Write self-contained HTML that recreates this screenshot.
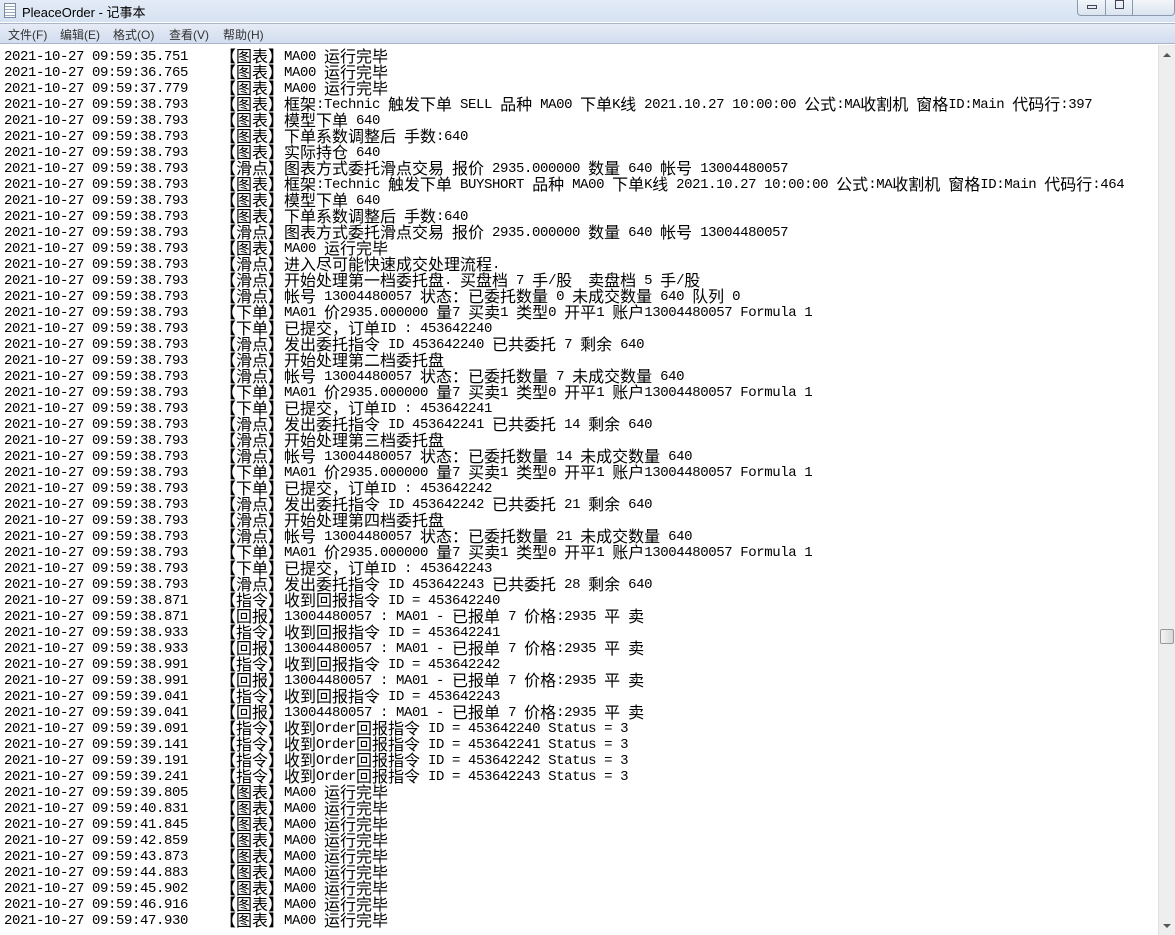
<!DOCTYPE html>
<html><head><meta charset="utf-8"><style>
*{margin:0;padding:0;box-sizing:border-box}
body{width:1175px;height:935px;overflow:hidden;background:#fff;position:relative;font-family:"Liberation Sans","Noto Sans CJK SC",sans-serif}
#title{position:absolute;left:0;top:0;width:1175px;height:22px;background:linear-gradient(#e3ecf7,#d6e2f1);}
#title .t{position:absolute;left:22px;top:2px;font-size:13px;color:#000}
#title .ic{position:absolute;left:4px;top:3px;width:12px;height:15px;border:1px solid #7a8aa0;background:repeating-linear-gradient(#fff 0 2px,#9ab 2px 3px)}
#btns{position:absolute;left:1077px;top:-1px;width:98px;height:17px;border:1px solid #8a99ad;border-top:none;border-radius:0 0 4px 4px;background:linear-gradient(#f4f7fb,#dbe4ef)}
#btns div{position:absolute;top:0;height:16px;border-right:1px solid #8a99ad}
#menu{position:absolute;left:0;top:23px;width:1175px;height:21px;background:linear-gradient(#e6ecf6,#d3ddef);border-top:1px solid #a9b6c8;border-bottom:1px solid #a9b6c8;font-size:12px;color:#333}
#menu span{position:absolute;top:2px}
#txt{position:absolute;left:4px;top:48px;width:1150px;font-family:"Liberation Mono","Noto Sans CJK SC",monospace;font-size:14px;letter-spacing:-0.4px;color:#000}
#txt div{height:16px;line-height:16px;position:relative;white-space:pre;top:1px}
#txt u{position:absolute;left:216px;top:-4px;text-decoration:none;white-space:pre;line-height:16px}
i{font-style:normal;font-size:16px;letter-spacing:0;font-family:"Noto Sans CJK SC","WenQuanYi Zen Hei",sans-serif;line-height:16px;position:relative;top:2px}
#sb{position:absolute;left:1158px;top:45px;width:17px;height:890px;background:#eeeeee;border-left:1px solid #e0e0e0}
#thumb{position:absolute;left:1px;top:584px;width:14px;height:15px;border:1px solid #9a9a9a;border-radius:2px;background:linear-gradient(90deg,#f4f4f4,#d8d8d8)}
</style></head><body>
<div id="title"><div class="ic"></div><div class="t">PleaceOrder - 记事本</div>
<div id="btns"><div style="left:0;width:28px"><span style="position:absolute;left:9px;top:6px;width:10px;height:4px;border:1px solid #445"></span></div><div style="left:28px;width:27px"><span style="position:absolute;left:9px;top:1px;width:9px;height:9px;border:1px solid #445"></span></div></div></div>
<div id="menu"><span style="left:8px">文件(F)</span><span style="left:60px">编辑(E)</span><span style="left:113px">格式(O)</span><span style="left:169px">查看(V)</span><span style="left:223px">帮助(H)</span></div>
<div id="txt"><div>2021-10-27 09:59:35.751<u><i>【图表】</i>MA00 <i>运行完毕</i></u></div><div>2021-10-27 09:59:36.765<u><i>【图表】</i>MA00 <i>运行完毕</i></u></div><div>2021-10-27 09:59:37.779<u><i>【图表】</i>MA00 <i>运行完毕</i></u></div><div>2021-10-27 09:59:38.793<u><i>【图表】框架</i>:Technic <i>触发下单</i> SELL <i>品种</i> MA00 <i>下单</i>K<i>线</i> 2021.10.27 10:00:00 <i>公式</i>:MA<i>收割机</i> <i>窗格</i>ID:Main <i>代码行</i>:397</u></div><div>2021-10-27 09:59:38.793<u><i>【图表】模型下单</i> 640</u></div><div>2021-10-27 09:59:38.793<u><i>【图表】下单系数调整后</i> <i>手数</i>:640</u></div><div>2021-10-27 09:59:38.793<u><i>【图表】实际持仓</i> 640</u></div><div>2021-10-27 09:59:38.793<u><i>【滑点】图表方式委托滑点交易</i> <i>报价</i> 2935.000000 <i>数量</i> 640 <i>帐号</i> 13004480057</u></div><div>2021-10-27 09:59:38.793<u><i>【图表】框架</i>:Technic <i>触发下单</i> BUYSHORT <i>品种</i> MA00 <i>下单</i>K<i>线</i> 2021.10.27 10:00:00 <i>公式</i>:MA<i>收割机</i> <i>窗格</i>ID:Main <i>代码行</i>:464</u></div><div>2021-10-27 09:59:38.793<u><i>【图表】模型下单</i> 640</u></div><div>2021-10-27 09:59:38.793<u><i>【图表】下单系数调整后</i> <i>手数</i>:640</u></div><div>2021-10-27 09:59:38.793<u><i>【滑点】图表方式委托滑点交易</i> <i>报价</i> 2935.000000 <i>数量</i> 640 <i>帐号</i> 13004480057</u></div><div>2021-10-27 09:59:38.793<u><i>【图表】</i>MA00 <i>运行完毕</i></u></div><div>2021-10-27 09:59:38.793<u><i>【滑点】进入尽可能快速成交处理流程</i>.</u></div><div>2021-10-27 09:59:38.793<u><i>【滑点】开始处理第一档委托盘</i>. <i>买盘档</i> 7 <i>手</i>/<i>股</i>  <i>卖盘档</i> 5 <i>手</i>/<i>股</i></u></div><div>2021-10-27 09:59:38.793<u><i>【滑点】帐号</i> 13004480057 <i>状态：已委托数量</i> 0 <i>未成交数量</i> 640 <i>队列</i> 0</u></div><div>2021-10-27 09:59:38.793<u><i>【下单】</i>MA01 <i>价</i>2935.000000 <i>量</i>7 <i>买卖</i>1 <i>类型</i>0 <i>开平</i>1 <i>账户</i>13004480057 Formula 1</u></div><div>2021-10-27 09:59:38.793<u><i>【下单】已提交，订单</i>ID : 453642240</u></div><div>2021-10-27 09:59:38.793<u><i>【滑点】发出委托指令</i> ID 453642240 <i>已共委托</i> 7 <i>剩余</i> 640</u></div><div>2021-10-27 09:59:38.793<u><i>【滑点】开始处理第二档委托盘</i></u></div><div>2021-10-27 09:59:38.793<u><i>【滑点】帐号</i> 13004480057 <i>状态：已委托数量</i> 7 <i>未成交数量</i> 640</u></div><div>2021-10-27 09:59:38.793<u><i>【下单】</i>MA01 <i>价</i>2935.000000 <i>量</i>7 <i>买卖</i>1 <i>类型</i>0 <i>开平</i>1 <i>账户</i>13004480057 Formula 1</u></div><div>2021-10-27 09:59:38.793<u><i>【下单】已提交，订单</i>ID : 453642241</u></div><div>2021-10-27 09:59:38.793<u><i>【滑点】发出委托指令</i> ID 453642241 <i>已共委托</i> 14 <i>剩余</i> 640</u></div><div>2021-10-27 09:59:38.793<u><i>【滑点】开始处理第三档委托盘</i></u></div><div>2021-10-27 09:59:38.793<u><i>【滑点】帐号</i> 13004480057 <i>状态：已委托数量</i> 14 <i>未成交数量</i> 640</u></div><div>2021-10-27 09:59:38.793<u><i>【下单】</i>MA01 <i>价</i>2935.000000 <i>量</i>7 <i>买卖</i>1 <i>类型</i>0 <i>开平</i>1 <i>账户</i>13004480057 Formula 1</u></div><div>2021-10-27 09:59:38.793<u><i>【下单】已提交，订单</i>ID : 453642242</u></div><div>2021-10-27 09:59:38.793<u><i>【滑点】发出委托指令</i> ID 453642242 <i>已共委托</i> 21 <i>剩余</i> 640</u></div><div>2021-10-27 09:59:38.793<u><i>【滑点】开始处理第四档委托盘</i></u></div><div>2021-10-27 09:59:38.793<u><i>【滑点】帐号</i> 13004480057 <i>状态：已委托数量</i> 21 <i>未成交数量</i> 640</u></div><div>2021-10-27 09:59:38.793<u><i>【下单】</i>MA01 <i>价</i>2935.000000 <i>量</i>7 <i>买卖</i>1 <i>类型</i>0 <i>开平</i>1 <i>账户</i>13004480057 Formula 1</u></div><div>2021-10-27 09:59:38.793<u><i>【下单】已提交，订单</i>ID : 453642243</u></div><div>2021-10-27 09:59:38.793<u><i>【滑点】发出委托指令</i> ID 453642243 <i>已共委托</i> 28 <i>剩余</i> 640</u></div><div>2021-10-27 09:59:38.871<u><i>【指令】收到回报指令</i> ID = 453642240</u></div><div>2021-10-27 09:59:38.871<u><i>【回报】</i>13004480057 : MA01 - <i>已报单</i> 7 <i>价格</i>:2935 <i>平</i> <i>卖</i></u></div><div>2021-10-27 09:59:38.933<u><i>【指令】收到回报指令</i> ID = 453642241</u></div><div>2021-10-27 09:59:38.933<u><i>【回报】</i>13004480057 : MA01 - <i>已报单</i> 7 <i>价格</i>:2935 <i>平</i> <i>卖</i></u></div><div>2021-10-27 09:59:38.991<u><i>【指令】收到回报指令</i> ID = 453642242</u></div><div>2021-10-27 09:59:38.991<u><i>【回报】</i>13004480057 : MA01 - <i>已报单</i> 7 <i>价格</i>:2935 <i>平</i> <i>卖</i></u></div><div>2021-10-27 09:59:39.041<u><i>【指令】收到回报指令</i> ID = 453642243</u></div><div>2021-10-27 09:59:39.041<u><i>【回报】</i>13004480057 : MA01 - <i>已报单</i> 7 <i>价格</i>:2935 <i>平</i> <i>卖</i></u></div><div>2021-10-27 09:59:39.091<u><i>【指令】收到</i>Order<i>回报指令</i> ID = 453642240 Status = 3</u></div><div>2021-10-27 09:59:39.141<u><i>【指令】收到</i>Order<i>回报指令</i> ID = 453642241 Status = 3</u></div><div>2021-10-27 09:59:39.191<u><i>【指令】收到</i>Order<i>回报指令</i> ID = 453642242 Status = 3</u></div><div>2021-10-27 09:59:39.241<u><i>【指令】收到</i>Order<i>回报指令</i> ID = 453642243 Status = 3</u></div><div>2021-10-27 09:59:39.805<u><i>【图表】</i>MA00 <i>运行完毕</i></u></div><div>2021-10-27 09:59:40.831<u><i>【图表】</i>MA00 <i>运行完毕</i></u></div><div>2021-10-27 09:59:41.845<u><i>【图表】</i>MA00 <i>运行完毕</i></u></div><div>2021-10-27 09:59:42.859<u><i>【图表】</i>MA00 <i>运行完毕</i></u></div><div>2021-10-27 09:59:43.873<u><i>【图表】</i>MA00 <i>运行完毕</i></u></div><div>2021-10-27 09:59:44.883<u><i>【图表】</i>MA00 <i>运行完毕</i></u></div><div>2021-10-27 09:59:45.902<u><i>【图表】</i>MA00 <i>运行完毕</i></u></div><div>2021-10-27 09:59:46.916<u><i>【图表】</i>MA00 <i>运行完毕</i></u></div><div>2021-10-27 09:59:47.930<u><i>【图表】</i>MA00 <i>运行完毕</i></u></div></div>
<div id="sb"><div style="position:absolute;left:4px;top:8px;width:0;height:0;border-left:4px solid transparent;border-right:4px solid transparent;border-bottom:4px solid #555"></div><div id="thumb"></div><div style="position:absolute;left:4px;top:879px;width:0;height:0;border-left:4px solid transparent;border-right:4px solid transparent;border-top:4px solid #555"></div></div>
</body></html>
